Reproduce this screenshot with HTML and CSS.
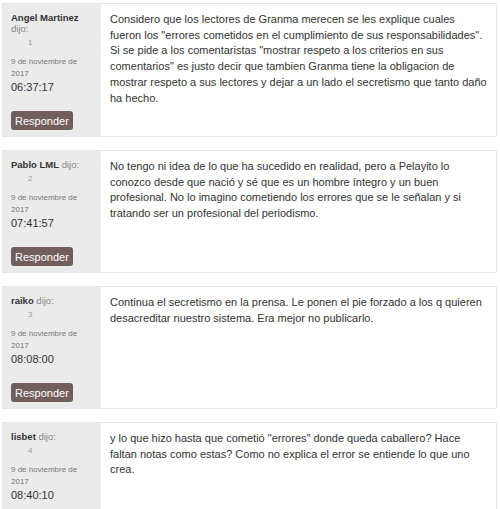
FILE: index.html
```html
<!DOCTYPE html>
<html lang="es">
<head>
    <meta charset="UTF-8">
    <meta name="viewport" content="width=device-width, initial-scale=1.0">
    <title>Comentarios</title>
    <link rel="stylesheet" href="styles.css">
</head>
<body>
    <div class="comments">
        <div class="comment">
            <div class="comment-meta">
                <div class="author"><strong>Angel Martinez</strong> dijo:</div>
                <div class="number">1</div>
                <div class="date">9 de noviembre de 2017</div>
                <div class="time">06:37:17</div>
                <button class="reply">Responder</button>
            </div>
            <div class="comment-body">
                Considero que los lectores de Granma merecen se les explique cuales fueron los "errores cometidos en el cumplimiento de sus responsabilidades". Si se pide a los comentaristas "mostrar respeto a los criterios en sus comentarios" es justo decir que tambien Granma tiene la obligacion de mostrar respeto a sus lectores y dejar a un lado el secretismo que tanto daño ha hecho.
            </div>
        </div>

        <div class="comment">
            <div class="comment-meta">
                <div class="author"><strong>Pablo LML</strong> dijo:</div>
                <div class="number">2</div>
                <div class="date">9 de noviembre de 2017</div>
                <div class="time">07:41:57</div>
                <button class="reply">Responder</button>
            </div>
            <div class="comment-body">
                No tengo ni idea de lo que ha sucedido en realidad, pero a Pelayito lo conozco desde que nació y sé que es un hombre íntegro y un buen profesional. No lo imagino cometiendo los errores que se le señalan y si tratando ser un profesional del periodismo.
            </div>
        </div>

        <div class="comment">
            <div class="comment-meta">
                <div class="author"><strong>raiko</strong> dijo:</div>
                <div class="number">3</div>
                <div class="date">9 de noviembre de 2017</div>
                <div class="time">08:08:00</div>
                <button class="reply">Responder</button>
            </div>
            <div class="comment-body">
                Continua el secretismo en la prensa. Le ponen el pie forzado a los q quieren desacreditar nuestro sistema. Era mejor no publicarlo.
            </div>
        </div>

        <div class="comment">
            <div class="comment-meta">
                <div class="author"><strong>lisbet</strong> dijo:</div>
                <div class="number">4</div>
                <div class="date">9 de noviembre de 2017</div>
                <div class="time">08:40:10</div>
                <button class="reply">Responder</button>
            </div>
            <div class="comment-body">
                y lo que hizo hasta que cometió "errores" donde queda caballero? Hace faltan notas como estas? Como no explica el error se entiende lo que uno crea.
            </div>
        </div>
    </div>
</body>
</html>
```

FILE: styles.css
```css
body {
    margin: 0;
    padding: 3px 3px 0 2px;
    font-family: "Liberation Sans", Arial, sans-serif;
    background-color: #fff;
    color: #333;
}

.comment {
    display: flex;
    border: 1px solid #e6e6e6;
    margin-bottom: 13px;
}

.comment-meta {
    width: 98px;
    flex-shrink: 0;
    box-sizing: border-box;
    padding: 8px 12px 6px 8px;
    background-color: #ebebeb;
}

.author {
    font-size: 9.5px;
    line-height: 11px;
    color: #888;
}

.author strong {
    color: #333;
}

.number {
    font-size: 8px;
    line-height: 11px;
    color: #999;
    padding-left: 17px;
    margin-top: 3px;
}

.date {
    font-size: 8px;
    line-height: 12px;
    color: #777;
    margin-top: 8px;
}

.time {
    font-size: 11px;
    line-height: 14px;
    color: #333;
}

.reply {
    display: block;
    margin-top: 17px;
    padding: 0 4px;
    height: 19px;
    border: none;
    border-radius: 3px;
    background-color: #725f5d;
    color: #fff;
    font-family: "Liberation Sans", Arial, sans-serif;
    font-size: 11px;
    cursor: pointer;
}

.comment-body {
    flex: 1;
    padding: 8px 8px 8px 9px;
    font-size: 11px;
    line-height: 15.7px;
    color: #333;
}
```
